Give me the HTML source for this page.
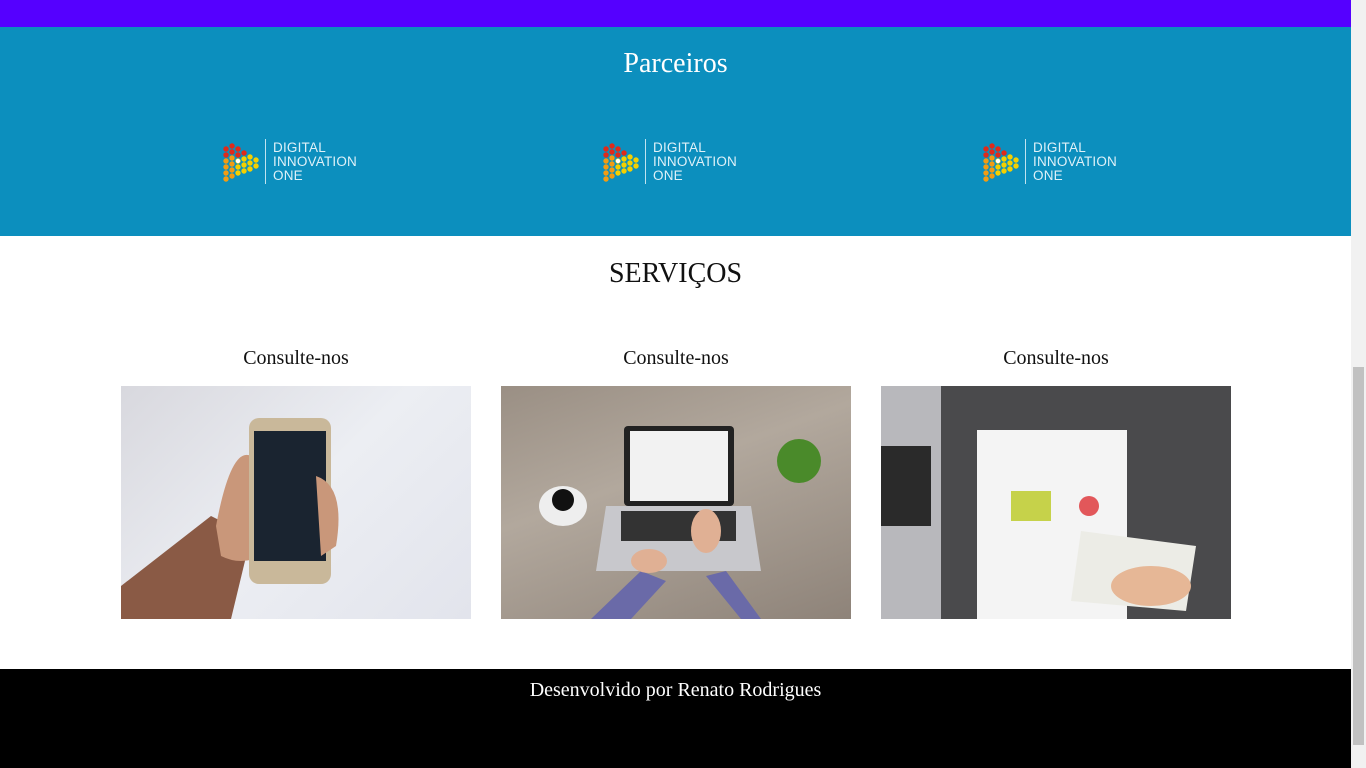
<!DOCTYPE html><html><head><meta charset="utf-8"><style>
*{margin:0;padding:0;box-sizing:border-box}
body{width:1366px;height:768px;overflow:hidden;font-family:"Liberation Serif",serif;position:relative;background:#fff}
.top{position:absolute;left:0;top:0;width:1351px;height:27px;background:#5500ff}
.parc{position:absolute;left:0;top:27px;width:1351px;height:209px;background:#0c8fbe;color:#fff}
.parc h2{font-weight:normal;font-size:28px;text-align:center;position:absolute;top:21px;width:100%}
.logo{position:absolute;top:111px;width:142px;height:48px}
.logo svg{position:absolute;left:0;top:3px}
.logo .t{position:absolute;left:51px;top:3px;font-family:"Liberation Sans",sans-serif;font-size:13.5px;line-height:14px;color:#dff1f8;letter-spacing:.2px}
.logo .bar{position:absolute;left:43px;top:1px;width:1px;height:45px;background:#bfe3f0}
.serv h2{position:absolute;top:258px;width:1351px;text-align:center;font-weight:normal;font-size:28px;color:#111}
.card{position:absolute;top:347px;width:350px}
.card h3{font-weight:normal;font-size:20px;text-align:center;color:#111;height:39px}
.img{width:350px;height:233px;position:relative;overflow:hidden}
.foot{position:absolute;left:0;top:669px;width:1351px;height:99px;background:#000;color:#fff;text-align:center;font-size:20px;padding-top:10px}
.sb{position:absolute;left:1351px;top:0;width:15px;height:768px;background:#f1f1f1}
.th{position:absolute;left:2px;top:367px;width:11px;height:378px;background:#c1c1c1}
</style></head><body>
<div class="top"></div>
<div class="parc"><h2>Parceiros</h2>
<div class="logo" style="left:222px"><svg width="40" height="44" viewBox="0 0 40 44"><g fill="#e02a1a"><circle cx="4" cy="8" r="2.7"/><circle cx="10" cy="5" r="2.7"/><circle cx="10" cy="11" r="2.7"/><circle cx="16" cy="8" r="2.7"/><circle cx="16" cy="14" r="2.7"/><circle cx="22" cy="12" r="2.7"/><circle cx="4" cy="14" r="2.7"/></g><g fill="#f39c12"><circle cx="4" cy="20" r="2.7"/><circle cx="4" cy="26" r="2.7"/><circle cx="4" cy="32" r="2.7"/><circle cx="4" cy="38" r="2.7"/><circle cx="10" cy="17" r="2.7"/><circle cx="10" cy="23" r="2.7"/><circle cx="10" cy="29" r="2.7"/><circle cx="10" cy="35" r="2.7"/></g><g fill="#f5d000"><circle cx="16" cy="20" r="2.7"/><circle cx="16" cy="26" r="2.7"/><circle cx="16" cy="32" r="2.7"/><circle cx="22" cy="18" r="2.7"/><circle cx="22" cy="24" r="2.7"/><circle cx="22" cy="30" r="2.7"/><circle cx="28" cy="16" r="2.7"/><circle cx="28" cy="22" r="2.7"/><circle cx="28" cy="28" r="2.7"/><circle cx="34" cy="19" r="2.7"/><circle cx="34" cy="25" r="2.7"/></g><circle cx="16" cy="20" r="2.2" fill="#fff"/></svg><div class="bar"></div><div class="t">DIGITAL<br>INNOVATION<br>ONE</div></div>
<div class="logo" style="left:602px"><svg width="40" height="44" viewBox="0 0 40 44"><g fill="#e02a1a"><circle cx="4" cy="8" r="2.7"/><circle cx="10" cy="5" r="2.7"/><circle cx="10" cy="11" r="2.7"/><circle cx="16" cy="8" r="2.7"/><circle cx="16" cy="14" r="2.7"/><circle cx="22" cy="12" r="2.7"/><circle cx="4" cy="14" r="2.7"/></g><g fill="#f39c12"><circle cx="4" cy="20" r="2.7"/><circle cx="4" cy="26" r="2.7"/><circle cx="4" cy="32" r="2.7"/><circle cx="4" cy="38" r="2.7"/><circle cx="10" cy="17" r="2.7"/><circle cx="10" cy="23" r="2.7"/><circle cx="10" cy="29" r="2.7"/><circle cx="10" cy="35" r="2.7"/></g><g fill="#f5d000"><circle cx="16" cy="20" r="2.7"/><circle cx="16" cy="26" r="2.7"/><circle cx="16" cy="32" r="2.7"/><circle cx="22" cy="18" r="2.7"/><circle cx="22" cy="24" r="2.7"/><circle cx="22" cy="30" r="2.7"/><circle cx="28" cy="16" r="2.7"/><circle cx="28" cy="22" r="2.7"/><circle cx="28" cy="28" r="2.7"/><circle cx="34" cy="19" r="2.7"/><circle cx="34" cy="25" r="2.7"/></g><circle cx="16" cy="20" r="2.2" fill="#fff"/></svg><div class="bar"></div><div class="t">DIGITAL<br>INNOVATION<br>ONE</div></div>
<div class="logo" style="left:982px"><svg width="40" height="44" viewBox="0 0 40 44"><g fill="#e02a1a"><circle cx="4" cy="8" r="2.7"/><circle cx="10" cy="5" r="2.7"/><circle cx="10" cy="11" r="2.7"/><circle cx="16" cy="8" r="2.7"/><circle cx="16" cy="14" r="2.7"/><circle cx="22" cy="12" r="2.7"/><circle cx="4" cy="14" r="2.7"/></g><g fill="#f39c12"><circle cx="4" cy="20" r="2.7"/><circle cx="4" cy="26" r="2.7"/><circle cx="4" cy="32" r="2.7"/><circle cx="4" cy="38" r="2.7"/><circle cx="10" cy="17" r="2.7"/><circle cx="10" cy="23" r="2.7"/><circle cx="10" cy="29" r="2.7"/><circle cx="10" cy="35" r="2.7"/></g><g fill="#f5d000"><circle cx="16" cy="20" r="2.7"/><circle cx="16" cy="26" r="2.7"/><circle cx="16" cy="32" r="2.7"/><circle cx="22" cy="18" r="2.7"/><circle cx="22" cy="24" r="2.7"/><circle cx="22" cy="30" r="2.7"/><circle cx="28" cy="16" r="2.7"/><circle cx="28" cy="22" r="2.7"/><circle cx="28" cy="28" r="2.7"/><circle cx="34" cy="19" r="2.7"/><circle cx="34" cy="25" r="2.7"/></g><circle cx="16" cy="20" r="2.2" fill="#fff"/></svg><div class="bar"></div><div class="t">DIGITAL<br>INNOVATION<br>ONE</div></div>
</div>
<div class="serv"><h2>SERVIÇOS</h2></div>
<div class="card" style="left:121px"><h3>Consulte-nos</h3><div class="img" style="background:linear-gradient(135deg,#d8d8de,#eceef3 50%,#e2e4ec)">
<svg width="350" height="233"><path d="M0 200 L90 130 L130 150 L110 233 L0 233Z" fill="#8a5a45"/><path d="M95 140 Q110 60 130 70 L140 170 Q120 180 100 170Z" fill="#c9977a"/><rect x="128" y="32" width="82" height="166" rx="10" fill="#c9b89a"/><rect x="133" y="45" width="72" height="130" fill="#1a2430"/><path d="M195 90 Q225 100 215 160 L200 170Z" fill="#c9977a"/></svg></div></div>
<div class="card" style="left:501px"><h3>Consulte-nos</h3><div class="img" style="background:linear-gradient(160deg,#9a8f84,#b2a89d 40%,#8e8379)">
<svg width="350" height="233"><rect x="123" y="40" width="110" height="80" rx="4" fill="#222"/><rect x="129" y="45" width="98" height="70" fill="#f2f2f2"/><path d="M105 120 L250 120 L260 185 L95 185Z" fill="#c8c8cc"/><rect x="120" y="125" width="115" height="30" fill="#333"/><ellipse cx="62" cy="120" rx="24" ry="20" fill="#eee"/><circle cx="62" cy="114" r="11" fill="#111"/><circle cx="298" cy="75" r="22" fill="#4a8a2a"/><path d="M90 233 L140 185 L165 195 L130 233Z M260 233 L225 185 L205 190 L240 233Z" fill="#6a6aa8"/><ellipse cx="148" cy="175" rx="18" ry="12" fill="#e0b094"/><ellipse cx="205" cy="145" rx="15" ry="22" fill="#e0b094"/></svg></div></div>
<div class="card" style="left:881px"><h3>Consulte-nos</h3><div class="img" style="background:#4a4a4c">
<svg width="350" height="233"><rect x="0" y="0" width="60" height="233" fill="#b8b8bc"/><rect x="0" y="60" width="50" height="80" fill="#2a2a2a"/><rect x="96" y="44" width="150" height="189" fill="#f4f4f4"/><path d="M200 145 L315 160 L305 225 L190 215Z" fill="#ecece6"/><ellipse cx="270" cy="200" rx="40" ry="20" fill="#e6b796"/><rect x="130" y="105" width="40" height="30" fill="#c6d24a"/><circle cx="208" cy="120" r="10" fill="#e2575a"/></svg></div></div>
<div class="foot">Desenvolvido por Renato Rodrigues</div>
<div class="sb"><div class="th"></div></div>
</body></html>
